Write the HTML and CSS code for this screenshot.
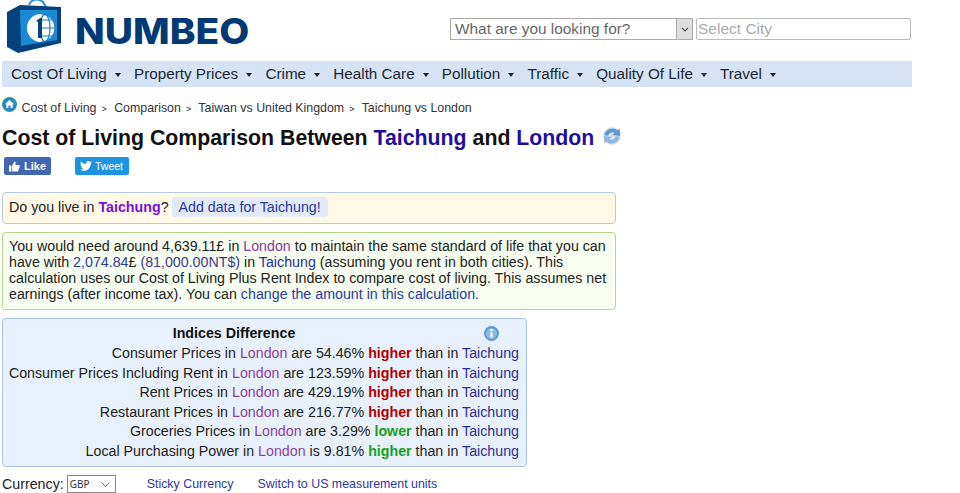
FILE: index.html
```html
<!DOCTYPE html>
<html lang="en">

<head>
    <meta charset="UTF-8">
    <title>Cost of Living Comparison Between Taichung and London</title>
    <link rel="stylesheet" href="styles.css">
</head>

<body>
    <div class="page">
        <div class="topbar">
            <a class="logo" href="#">
                <svg class="logo-bag" width="62" height="54" viewBox="0 0 62 54">
                    <path d="M29 5 C31 -1 38 -2 43 2 L46 7" fill="none" stroke="#2a8fd0" stroke-width="2" />
                    <path d="M7 12 L20 5 L61 7 L61 43 L18 53 L7 47 Z" fill="#03427f" />
                    <path d="M20 10 L57 10 L57 40 L21 46 Z" fill="#1a8ad4" />
                    <circle cx="41" cy="28" r="14" fill="#fff" />
                    <g fill="none" stroke="#1a7fc4" stroke-width="1.2">
                        <path d="M41 14 A14 14 0 0 1 41 42" />
                        <ellipse cx="45" cy="28" rx="5" ry="13.5" />
                        <path d="M41 20 H52 M41 28 H55 M41 36 H52" />
                    </g>
                    <path d="M36 21 L40 18 L42 18 L42 38 L38 38 L38 22 Z" fill="#03427f" />
                </svg>
                <span class="logo-text">NUMBEO</span>
            </a>
            <form class="searchform">
                <div class="fake-select">
                    <span>What are you looking for?</span>
                    <span class="fake-arrow">
                        <svg width="8" height="5" viewBox="0 0 8 5"><path d="M1 1 L4 4 L7 1" fill="none" stroke="#555" stroke-width="1.2" /></svg>
                    </span>
                </div>
                <input class="cityinput" type="text" placeholder="Select City">
            </form>
        </div>

        <ul class="menubar">
            <li>Cost Of Living</li>
            <li>Property Prices</li>
            <li>Crime</li>
            <li>Health Care</li>
            <li>Pollution</li>
            <li>Traffic</li>
            <li>Quality Of Life</li>
            <li>Travel</li>
        </ul>

        <div class="breadcrumb">
            <svg class="homeicon" width="15" height="15" viewBox="0 0 15 15">
                <circle cx="7.5" cy="7.5" r="7.5" fill="#2d8cb5" />
                <path d="M7.5 3 L12 7.3 L10.6 7.3 L10.6 11 L8.6 11 L8.6 8.5 L6.4 8.5 L6.4 11 L4.4 11 L4.4 7.3 L3 7.3 Z" fill="#fff" />
            </svg>
            <a href="#">Cost of Living</a><span class="sep">&gt;</span>
            <a href="#">Comparison</a><span class="sep">&gt;</span>
            <a href="#">Taiwan vs United Kingdom</a><span class="sep">&gt;</span>
            <a href="#">Taichung vs London</a>
        </div>

        <h1 class="title">Cost of Living Comparison Between <a href="#">Taichung</a> and <a href="#">London</a>
            <svg class="swapicon" width="18" height="18" viewBox="0 0 19 19">
                <circle cx="9.5" cy="9.5" r="9.5" fill="#d3e3f3" />
                <path d="M3.5 9 A6.5 6.5 0 0 1 14 5" fill="none" stroke="#5f97cf" stroke-width="4" />
                <path d="M17.5 1.5 L18 9.5 L10 8.5 Z" fill="#5f97cf" />
                <path d="M15.5 10 A6.5 6.5 0 0 1 5 14" fill="none" stroke="#8fb7df" stroke-width="4" />
                <path d="M1.5 17.5 L1 9.5 L9 10.5 Z" fill="#8fb7df" />
            </svg>
        </h1>

        <div class="sharebtns">
            <a class="fb-btn" href="#">
                <svg width="12" height="11" viewBox="0 0 11 10"><path d="M0 4 H2.4 V10 H0 Z M3.2 4 L5.5 0 C6.6 0 7 1 6.6 2 L6.2 3.4 H10 C11 3.4 11 4.5 10.6 5 L9.4 9.2 C9.2 9.8 8.8 10 8.2 10 H3.2 Z" fill="#fff" /></svg>
                Like
            </a>
            <a class="tw-btn" href="#">
                <svg width="12" height="10" viewBox="0 0 24 20"><path d="M24 2.4 C23 2.8 22.2 3 21.2 3.1 C22.3 2.5 23 1.5 23.4 .4 C22.4 1 21.3 1.4 20.2 1.6 C18 -.7 14.3 -.2 12.8 2.4 C12 3.7 11.9 5 12.2 6.1 C8 5.9 4.3 3.9 1.7 .9 C.4 3.1 1 6 3.2 7.5 C2.4 7.5 1.6 7.3 1 6.9 C1 9.3 2.7 11.3 5 11.8 C4.3 12 3.5 12 2.8 11.9 C3.4 13.9 5.3 15.3 7.5 15.3 C5.4 17 2.7 17.8 0 17.5 C2.2 18.9 4.8 19.7 7.5 19.7 C16.6 19.7 21.8 12 21.5 5 C22.5 4.3 23.3 3.4 24 2.4 Z" fill="#fff" /></svg>
                Tweet
            </a>
        </div>

        <div class="livebox">Do you live in <a class="livecity" href="#">Taichung</a>? <a class="adddata" href="#">Add data for Taichung!</a></div>

        <div class="summarybox">
            You would need around 4,639.11£ in <a class="visited" href="#">London</a> to maintain the same standard of life that you can have with <a href="#">2,074.84</a>£ <span class="muted">(81,000.00NT$)</span> in <a class="dark" href="#">Taichung</a> (assuming you rent in both cities). This calculation uses our Cost of Living Plus Rent Index to compare cost of living. This assumes net earnings (after income tax). You can <a href="#">change the amount in this calculation.</a>
        </div>

        <div class="indicesbox">
            <div class="indiceshead">
                <b>Indices Difference</b>
                <svg class="infoicon" width="15" height="15" viewBox="0 0 15 15">
                    <circle cx="7.5" cy="7.5" r="7.5" fill="#5b9bd0" />
                    <circle cx="7.5" cy="7.5" r="5.5" fill="#8db9de" />
                    <rect x="6.4" y="6.5" width="2.2" height="5" fill="#fff" />
                    <rect x="6.4" y="3.2" width="2.2" height="2" fill="#fff" />
                </svg>
            </div>
            <div class="indexrow">Consumer Prices in <a class="visited" href="#">London</a> are 54.46% <b class="bad">higher</b> than in <a class="dark" href="#">Taichung</a></div>
            <div class="indexrow">Consumer Prices Including Rent in <a class="visited" href="#">London</a> are 123.59% <b class="bad">higher</b> than in <a class="dark" href="#">Taichung</a></div>
            <div class="indexrow">Rent Prices in <a class="visited" href="#">London</a> are 429.19% <b class="bad">higher</b> than in <a class="dark" href="#">Taichung</a></div>
            <div class="indexrow">Restaurant Prices in <a class="visited" href="#">London</a> are 216.77% <b class="bad">higher</b> than in <a class="dark" href="#">Taichung</a></div>
            <div class="indexrow">Groceries Prices in <a class="visited" href="#">London</a> are 3.29% <b class="good">lower</b> than in <a class="dark" href="#">Taichung</a></div>
            <div class="indexrow">Local Purchasing Power in <a class="visited" href="#">London</a> is 9.81% <b class="good">higher</b> than in <a class="dark" href="#">Taichung</a></div>
        </div>

        <div class="currencyrow">
            <span class="currencylabel">Currency:</span>
            <span class="selwrap">
                <select class="currencysel">
                    <option>GBP</option>
                </select>
                <svg class="selarrow" width="9" height="5" viewBox="0 0 9 5"><path d="M.5 .5 L4.5 4.5 L8.5 .5" fill="none" stroke="#777" /></svg>
            </span>
            <a class="stickylink" href="#">Sticky Currency</a>
            <a href="#">Switch to US measurement units</a>
        </div>
    </div>
</body>

</html>
```
FILE: styles.css
```css
html {
    overflow: hidden;
}

body {
    margin: 0;
    background-color: white;
    color: #222;
    font-family: 'Liberation Sans', Arial, sans-serif;
    font-size: 14.24px;
}

a {
    color: #2a3aa0;
    text-decoration: none;
}

.page {
    width: 912px;
    padding-left: 2px;
    box-sizing: border-box;
}

/* logo and search */
.topbar {
    display: flex;
    justify-content: space-between;
    height: 61px;
}

.logo {
    display: flex;
    align-items: flex-start;
}

.logo-bag {
    margin-left: -2px;
    overflow: visible;
}

.logo-text {
    margin: 9px 0 0 13px;
    color: #003a75;
    font-family: Inter, 'Liberation Sans', sans-serif;
    font-size: 35px;
    line-height: 44px;
    font-weight: 800;
    transform: scaleX(1.11);
    transform-origin: left;
}

.searchform {
    display: flex;
    gap: 3px;
    padding: 18px 1px 0 0;
}

.fake-select {
    display: flex;
    justify-content: space-between;
    width: 243px;
    height: 22px;
    box-sizing: border-box;
    padding-left: 4px;
    border: 1px solid #aaa;
    color: #666;
    font-size: 15.4px;
    line-height: 20px;
}

.fake-arrow {
    display: flex;
    align-items: center;
    justify-content: center;
    width: 15px;
    background-color: #ddd;
    border-left: 1px solid #aaa;
}

.cityinput {
    width: 215px;
    height: 22px;
    box-sizing: border-box;
    padding: 0 1px;
    border: 1px solid #bbb;
    border-radius: 2px;
    font-family: 'Liberation Sans', Arial, sans-serif;
    font-size: 15.5px;
}

.cityinput::placeholder {
    color: #aaa;
}

/* menu */
.menubar {
    display: flex;
    gap: 13.2px;
    height: 26px;
    margin: 0;
    padding: 0 0 0 9px;
    list-style: none;
    background-color: #d6e3f4;
    color: #1c2733;
    font-size: 15.25px;
    line-height: 26px;
}

.menubar li::after {
    content: '';
    display: inline-block;
    margin-left: 8px;
    vertical-align: 2px;
    border-top: 4px solid #222;
    border-left: 3.5px solid transparent;
    border-right: 3.5px solid transparent;
}

.breadcrumb {
    height: 16px;
    margin-top: 10px;
    font-size: 12.39px;
    line-height: 16px;
}

.breadcrumb a {
    color: #333;
}

.homeicon {
    margin-right: 1px;
    vertical-align: 0;
}

.sep {
    margin: 0 4px 0 5px;
    font-size: 9px;
}

.title {
    margin: 12px 0 0 0;
    color: #111;
    font-size: 21.31px;
    line-height: 26px;
    font-weight: bold;
}

.title a {
    color: #1f0fa0;
}

.swapicon {
    margin-left: 3px;
    vertical-align: 0;
}

.sharebtns {
    display: flex;
    gap: 24px;
    margin: 6px 0 0 2px;
}

.fb-btn,
.tw-btn {
    display: flex;
    align-items: center;
    gap: 4px;
    height: 18px;
    padding: 0 5px;
    border-radius: 2px;
    color: white;
    font-size: 11px;
}

.fb-btn {
    width: 37px;
    background-color: #4267b2;
    font-weight: bold;
}

.tw-btn {
    width: 44px;
    gap: 3px;
    background-color: #1b95e0;
    font-size: 10.5px;
}

.livebox,
.summarybox,
.indicesbox {
    box-sizing: border-box;
    border-radius: 4px;
}

.livebox {
    width: 614px;
    height: 32px;
    margin-top: 17px;
    padding: 0 6px;
    background-color: #fef9e7;
    border: 1px solid #b5cadf;
    line-height: 29px;
}

.livecity {
    color: #7a10d8;
    font-weight: bold;
}

.adddata {
    display: inline-block;
    margin-left: -1px;
    padding: 0 7px;
    background-color: #e2e9f7;
    border-radius: 3px;
    line-height: 20px;
}

.summarybox {
    width: 614px;
    margin-top: 8px;
    padding: 5px 6px 7px 6px;
    background-color: #f7fdf0;
    border: 1px solid #b2d98a;
    line-height: 16px;
}

.visited {
    color: #8a3f9e;
}

.dark {
    color: #2c3090;
}

.muted {
    color: #443a88;
}

.indicesbox {
    width: 525px;
    height: 149px;
    margin-top: 8px;
    padding: 5px 7px 0 0;
    background-color: #e8f1fb;
    border: 1px solid #a9c2e6;
    text-align: right;
}

.indiceshead {
    position: relative;
    height: 20px;
    padding-right: 54px;
    box-sizing: border-box;
    text-align: center;
    line-height: 19px;
    color: #111;
}

.infoicon {
    position: absolute;
    top: 2px;
    right: 20px;
}

.indexrow {
    height: 19.6px;
    line-height: 19.6px;
}

.bad {
    color: #b00000;
}

.good {
    color: #16a01a;
}

.currencyrow {
    display: flex;
    align-items: center;
    height: 20px;
    margin-top: 7px;
    color: #222;
    font-size: 12.4px;
}

.currencylabel {
    font-size: 14.24px;
}

.selwrap {
    position: relative;
    display: flex;
    margin: 0 31px 0 3px;
}

.currencysel {
    width: 49px;
    height: 18px;
    padding: 0 0 0 2px;
    appearance: none;
    font-family: 'Noto Sans', sans-serif;
    font-size: 10px;
    color: #333;
    background-color: white;
    border: 1px solid #888;
    border-radius: 0;
}

.selarrow {
    position: absolute;
    top: 7px;
    right: 6px;
}

.stickylink {
    margin-right: 24px;
}
```
